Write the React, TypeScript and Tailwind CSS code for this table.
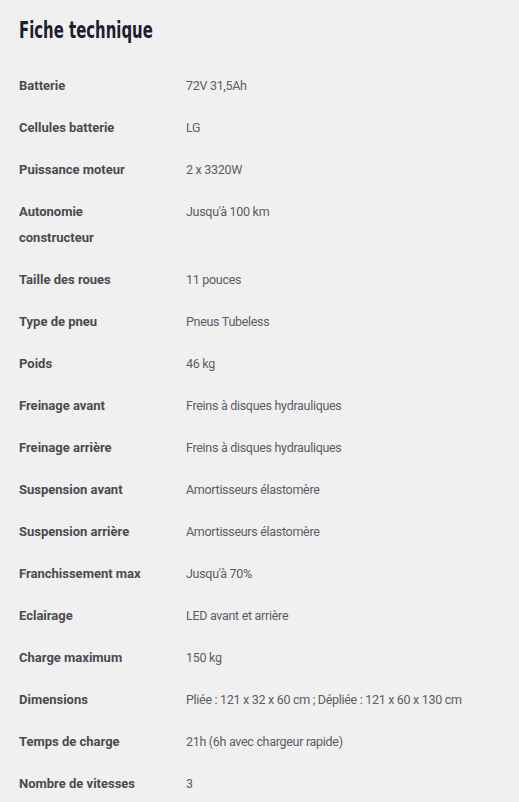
const specs: [string, string][] = [
  ['Batterie', '72V 31,5Ah'],
  ['Cellules batterie', 'LG'],
  ['Puissance moteur', '2 x 3320W'],
  ['Autonomie constructeur', "Jusqu'à 100 km"],
  ['Taille des roues', '11 pouces'],
  ['Type de pneu', 'Pneus Tubeless'],
  ['Poids', '46 kg'],
  ['Freinage avant', 'Freins à disques hydrauliques'],
  ['Freinage arrière', 'Freins à disques hydrauliques'],
  ['Suspension avant', 'Amortisseurs élastomère'],
  ['Suspension arrière', 'Amortisseurs élastomère'],
  ['Franchissement max', "Jusqu'à 70%"],
  ['Eclairage', 'LED avant et arrière'],
  ['Charge maximum', '150 kg'],
  ['Dimensions', 'Pliée : 121 x 32 x 60 cm ; Dépliée : 121 x 60 x 130 cm'],
  ['Temps de charge', '21h (6h avec chargeur rapide)'],
  ['Nombre de vitesses', '3'],
];

export default function App() {
  return (
    <div className="min-h-screen bg-[#f0f0f0] px-[19px] pt-[15px] pb-4">
      <h2
        className="origin-left scale-x-[0.72] text-[23px] leading-[30px] font-bold text-[#1b1d30] font-stretch-condensed whitespace-nowrap"
        style={{ fontFamily: '"DejaVu Sans Condensed", "DejaVu Sans", sans-serif' }}
      >
        Fiche technique
      </h2>
      <div
        className="mt-[20px] grid grid-cols-[167px_1fr] leading-[26px]"
        style={{ fontFamily: '"Roboto", "Liberation Sans", sans-serif' }}
      >
        {specs.map(([label, value]) => (
          <div key={label} className="contents">
            <div className="py-2 pr-[26px] text-[13px] font-bold text-[#4a4a4f]">{label}</div>
            <div className="py-2 text-[12.5px] tracking-[-0.3px] text-[#5c5c66]">{value}</div>
          </div>
        ))}
      </div>
    </div>
  );
}
